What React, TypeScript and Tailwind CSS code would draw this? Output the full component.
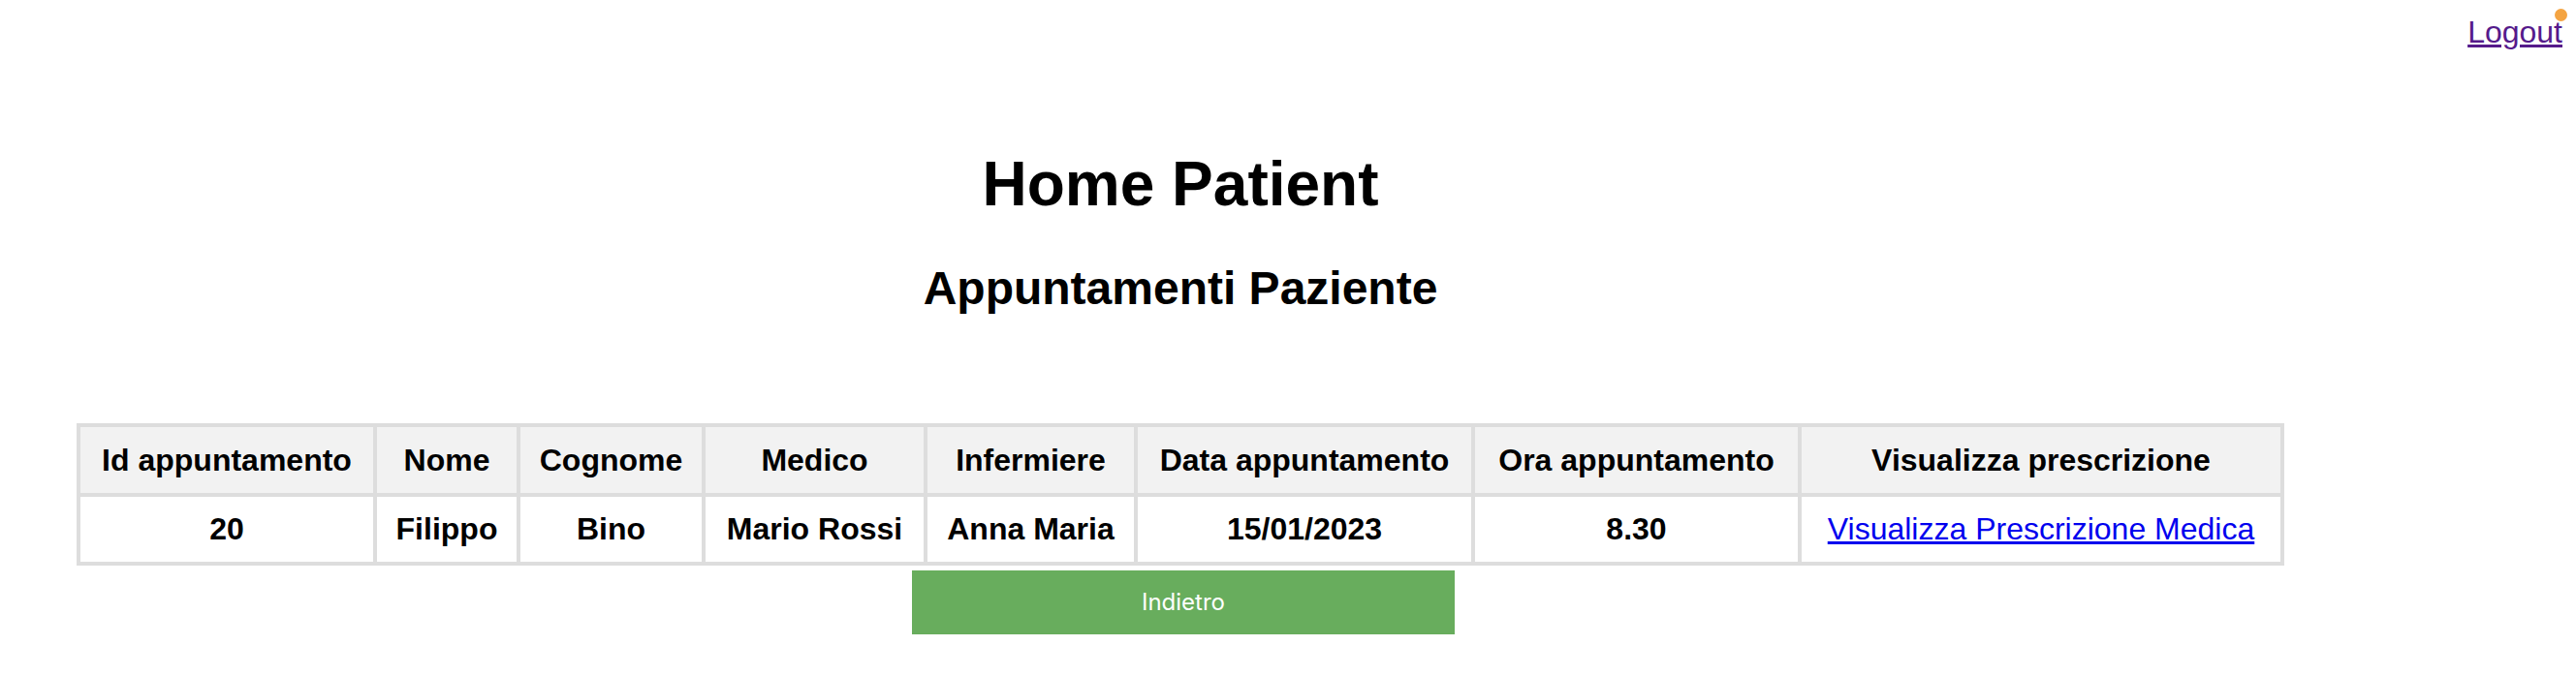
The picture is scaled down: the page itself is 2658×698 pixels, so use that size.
const headers = [
  "Id appuntamento",
  "Nome",
  "Cognome",
  "Medico",
  "Infermiere",
  "Data appuntamento",
  "Ora appuntamento",
  "Visualizza prescrizione",
];

const row = ["20", "Filippo", "Bino", "Mario Rossi", "Anna Maria", "15/01/2023", "8.30"];

export default function App() {
  return (
    <div
      className="relative w-full min-h-[698px] bg-white text-black"
      style={{ fontFamily: "'Liberation Sans', Arial, sans-serif" }}
    >
      {/* top bar — logout link */}
      <div className="flex justify-end pt-[15px] pr-[14px]">
        <a href="#" className="text-[32px] leading-[37px] text-[#551a8b] underline">
          Logout
        </a>
      </div>
      <span className="absolute left-[2636px] top-[9px] w-[13px] h-[13px] rounded-full bg-[#f4a442]" />

      <div className="ml-[79px] w-[2278px] flex flex-col items-center">
        <h1 className="mt-[101px] text-[64px] leading-[74px] font-bold">Home Patient</h1>
        <h2 className="mt-[43px] text-[48px] leading-[55px] font-bold">Appuntamenti Paziente</h2>

        {/* appointments table */}
        <div className="mt-[112px] w-[2278px] grid grid-cols-[302px_144px_187px_225px_213px_344px_333px_494px] grid-rows-[68px_67px] gap-[4px] p-[4px] bg-[#dddddd] text-[32px] leading-[37px] font-bold">
          {headers.map((h) => (
            <div key={h} className="bg-[#f2f2f2] flex items-center justify-center whitespace-nowrap">
              {h}
            </div>
          ))}
          {row.map((v, i) => (
            <div key={i} className="bg-white flex items-center justify-center whitespace-nowrap">
              {v}
            </div>
          ))}
          <div className="bg-white flex items-center justify-center whitespace-nowrap">
            <a href="#" className="font-normal text-[#0000ee] underline">
              Visualizza Prescrizione Medica
            </a>
          </div>
        </div>

        <button
          className="self-start ml-[862px] mt-[5px] w-[560px] h-[66px] bg-[#68ad5d] text-white text-[24px] flex items-center justify-center"
          style={{ fontFamily: "Inter, 'Noto Sans', sans-serif" }}
        >
          Indietro
        </button>
      </div>
    </div>
  );
}
